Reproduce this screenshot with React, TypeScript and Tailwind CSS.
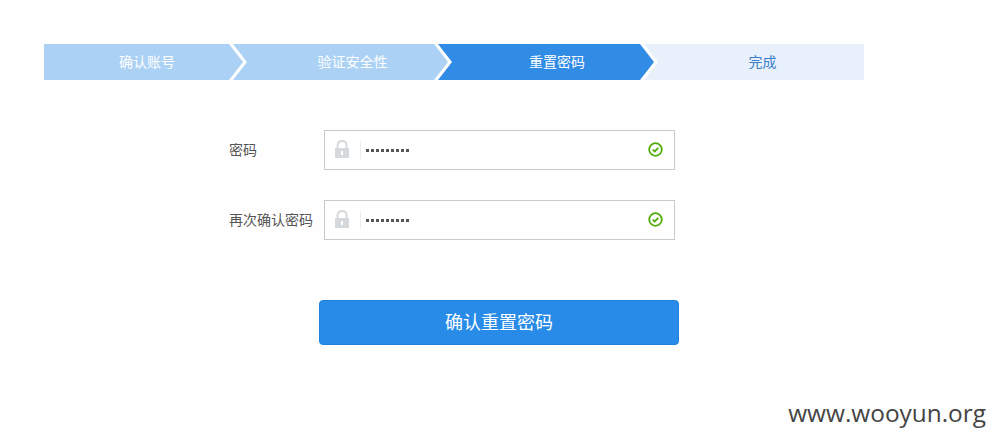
import React from 'react'

const font = '[font-family:"Liberation_Sans","Noto_Sans_CJK_SC",sans-serif]'

const steps = [
    { label: '确认账号', box: 'w-[199px] pl-[7px] bg-[#abd1f5] text-white [clip-path:polygon(0_0,185px_0,199px_50%,185px_100%,0_100%)]' },
    { label: '验证安全性', box: 'w-[215px] -ml-[10px] pl-[24px] bg-[#abd1f5] text-white [clip-path:polygon(0_0,201px_0,215px_50%,201px_100%,0_100%,14px_50%)]' },
    { label: '重置密码', box: 'w-[216px] -ml-[10px] pl-[22px] bg-[#318ce6] text-white [clip-path:polygon(0_0,202px_0,216px_50%,202px_100%,0_100%,14px_50%)]' },
    { label: '完成', box: 'w-[220px] -ml-[10px] pl-[17px] bg-[#e8f1fb] text-[#3a7fc8] [clip-path:polygon(0_0,100%_0,100%_100%,0_100%,14px_50%)]' },
]

function LockIcon() {
    return (
        <svg width="16" height="18" viewBox="0 0 16 18" className="-mt-[2px]" aria-hidden="true">
            <path d="M3.500 8V5.200C3.500 2.700 5.400 1 8 1s4.500 1.700 4.500 4.200V8" fill="none" stroke="#d5d9dc" strokeWidth="2" />
            <path fillRule="evenodd" d="M1 8h14v10H1zM7 11v4h2v-4z" fill="#d5d9dc" />
        </svg>
    )
}

function CheckIcon() {
    return (
        <svg width="15" height="15" viewBox="0 0 15 15" className="-mt-[2px]" aria-hidden="true">
            <circle cx="7.500" cy="7.500" r="6.300" fill="none" stroke="#52ac0a" strokeWidth="1.800" />
            <path d="M4.700 7.600l2 1.900 3.600-3.700" fill="none" stroke="#52ac0a" strokeWidth="1.800" />
        </svg>
    )
}

function PasswordRow({ label }: { label: string }) {
    return (
        <div className="flex items-center">
            <span className="w-[95px] text-sm text-[#555]">{label}</span>
            <div className="flex h-10 w-[351px] items-center border border-[#c9c9c9] bg-white">
                <div className="ml-[9px] flex w-[16px] justify-center">
                    <LockIcon />
                </div>
                <div className="ml-[10px] h-[18px] w-px bg-[#ececec]" />
                <span className="ml-[5px] flex gap-[2px]">
                    {Array.from({ length: 9 }).map((_, i) => (
                        <i key={i} className="block h-[3px] w-[3px] bg-[#555]" />
                    ))}
                </span>
                <div className="ml-auto mr-[11px] flex">
                    <CheckIcon />
                </div>
            </div>
        </div>
    )
}

export default function App() {
    return (
        <div className={`relative h-[442px] w-[995px] overflow-hidden bg-[#fefefe] pt-[44px] ${font}`}>
            <div className="ml-[44px] flex">
                {steps.map((s) => (
                    <div key={s.label} className={`flex h-9 items-center justify-center text-sm ${s.box}`}>
                        {s.label}
                    </div>
                ))}
            </div>
            <div className="ml-[229px] mt-[50px] flex flex-col gap-[30px]">
                <PasswordRow label="密码" />
                <PasswordRow label="再次确认密码" />
            </div>
            <button
                type="button"
                className="ml-[319px] mt-[60px] h-[45px] w-[360px] rounded border border-[#1e82e0] bg-[#288be7] text-lg text-white"
            >
                确认重置密码
            </button>
            <span className='absolute right-[9px] top-[395px] [font-family:"Open_Sans",sans-serif] text-[24.400px] text-[#444]'>
                www.wooyun.org
            </span>
        </div>
    )
}
